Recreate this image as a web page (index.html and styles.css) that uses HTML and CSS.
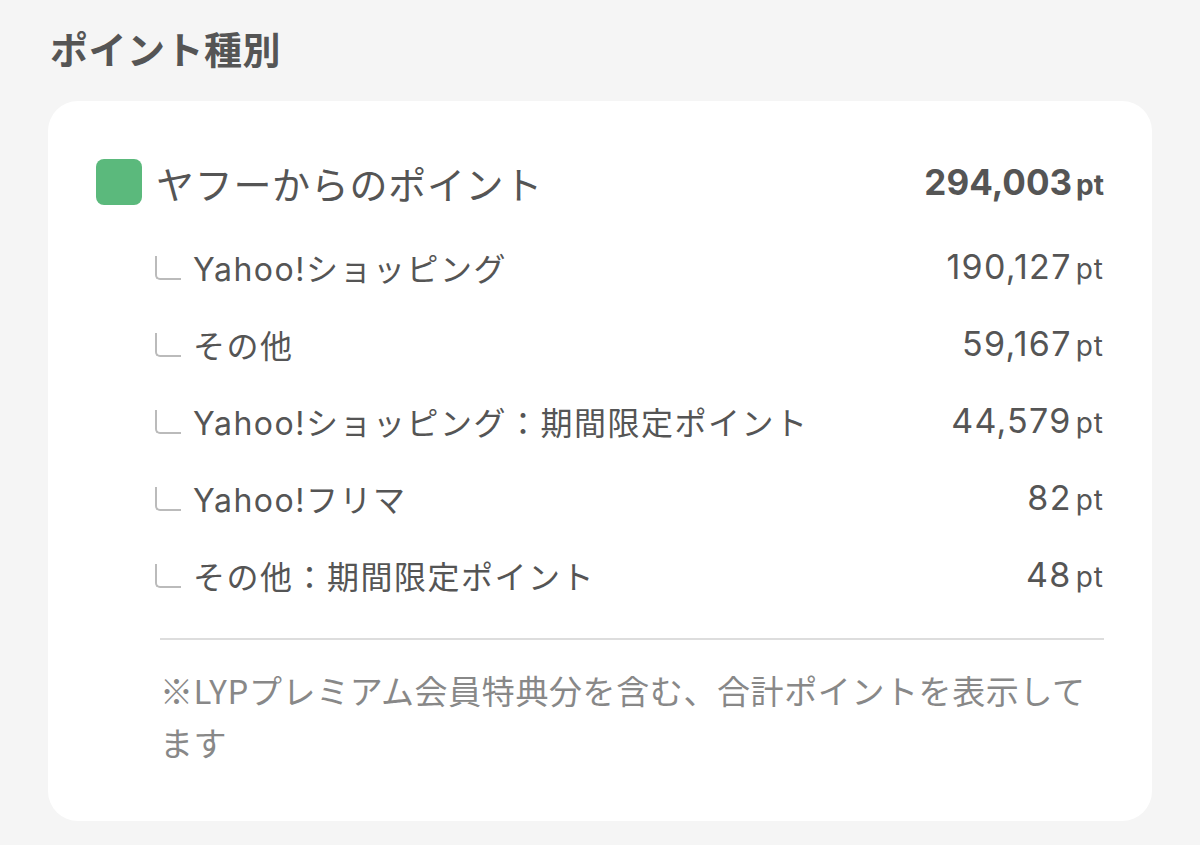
FILE: index.html
```html
<!DOCTYPE html>
<html lang="ja">
<head>
    <meta charset="UTF-8">
    <meta name="viewport" content="width=device-width, initial-scale=1.0">
    <link rel="stylesheet" href="styles.css">
</head>
<body>
    <section class="points">
        <h2 class="points-title">ポイント種別</h2>
        <div class="card">
            <div class="row-main">
                <span class="swatch"></span>
                <span class="main-label">ヤフーからのポイント</span>
                <span class="amount amount-total">294,003<small>pt</small></span>
            </div>
            <ul class="sub-list">
                <li class="sub-row">
                    <span class="branch"></span>
                    <span class="sub-label">Yahoo!ショッピング</span>
                    <span class="amount">190,127<small>pt</small></span>
                </li>
                <li class="sub-row">
                    <span class="branch"></span>
                    <span class="sub-label">その他</span>
                    <span class="amount">59,167<small>pt</small></span>
                </li>
                <li class="sub-row">
                    <span class="branch"></span>
                    <span class="sub-label">Yahoo!ショッピング：期間限定ポイント</span>
                    <span class="amount">44,579<small>pt</small></span>
                </li>
                <li class="sub-row">
                    <span class="branch"></span>
                    <span class="sub-label">Yahoo!フリマ</span>
                    <span class="amount">82<small>pt</small></span>
                </li>
                <li class="sub-row">
                    <span class="branch"></span>
                    <span class="sub-label">その他：期間限定ポイント</span>
                    <span class="amount">48<small>pt</small></span>
                </li>
            </ul>
            <div class="note">※LYPプレミアム会員特典分を含む、合計ポイントを表示してます</div>
        </div>
    </section>
</body>
</html>
```

FILE: styles.css
```css
* {
    margin: 0;
    padding: 0;
    box-sizing: border-box;
}
body {
    background: #f5f5f5;
    color: #555;
    font-family: "Noto Sans CJK JP", sans-serif;
    width: 1200px;
    height: 845px;
    overflow: hidden;
}
.points {
    padding: 22px 48px 0;
}
.points-title {
    font-size: 38px;
    font-weight: bold;
    color: #555;
    line-height: 52px;
    margin-left: 2px;
    margin-bottom: 27px;
    letter-spacing: 0.5px;
}
.card {
    background: #fff;
    border-radius: 30px;
    padding: 58px 48px 53px;
}

/* header row */
.row-main {
    display: flex;
    align-items: center;
    height: 46px;
}
.swatch {
    width: 46px;
    height: 46px;
    border-radius: 8px;
    background: #5bb97c;
    margin-right: 14px;
}
.main-label {
    font-size: 38px;
    letter-spacing: 0.7px;
    flex: 1;
    color: #555;
}
.amount {
    font-family: Inter, "Noto Sans CJK JP", sans-serif;
    font-size: 34px;
    letter-spacing: 1.3px;
    color: #555;
    white-space: nowrap;
}
.amount small {
    font-size: 28px;
    letter-spacing: 1px;
    margin-left: 4px;
}
.amount-total {
    font-size: 35px;
    font-weight: bold;
    letter-spacing: 0;
}
.amount-total small {
    font-size: 28px;
    letter-spacing: 0;
    margin-left: 4px;
}

/* sub rows */
.sub-list {
    list-style: none;
    margin-top: 23px;
}
.sub-row {
    display: flex;
    align-items: center;
    height: 77px;
    padding-left: 59px;
}
.branch {
    width: 26px;
    height: 24px;
    border-left: 2px solid #bbb;
    border-bottom: 2px solid #bbb;
    border-bottom-left-radius: 5px;
    margin-top: 2px;
    margin-right: 12px;
}
.sub-label {
    flex: 1;
    font-family: Inter, "Noto Sans CJK JP", sans-serif;
    font-size: 32px;
    letter-spacing: 1.5px;
    color: #555;
}

.note {
    margin: 25px 0 0 64px;
    padding-top: 24px;
    border-top: 2px solid #ddd;
    font-size: 33px;
    letter-spacing: 0.6px;
    line-height: 52px;
    color: #888;
}
```
